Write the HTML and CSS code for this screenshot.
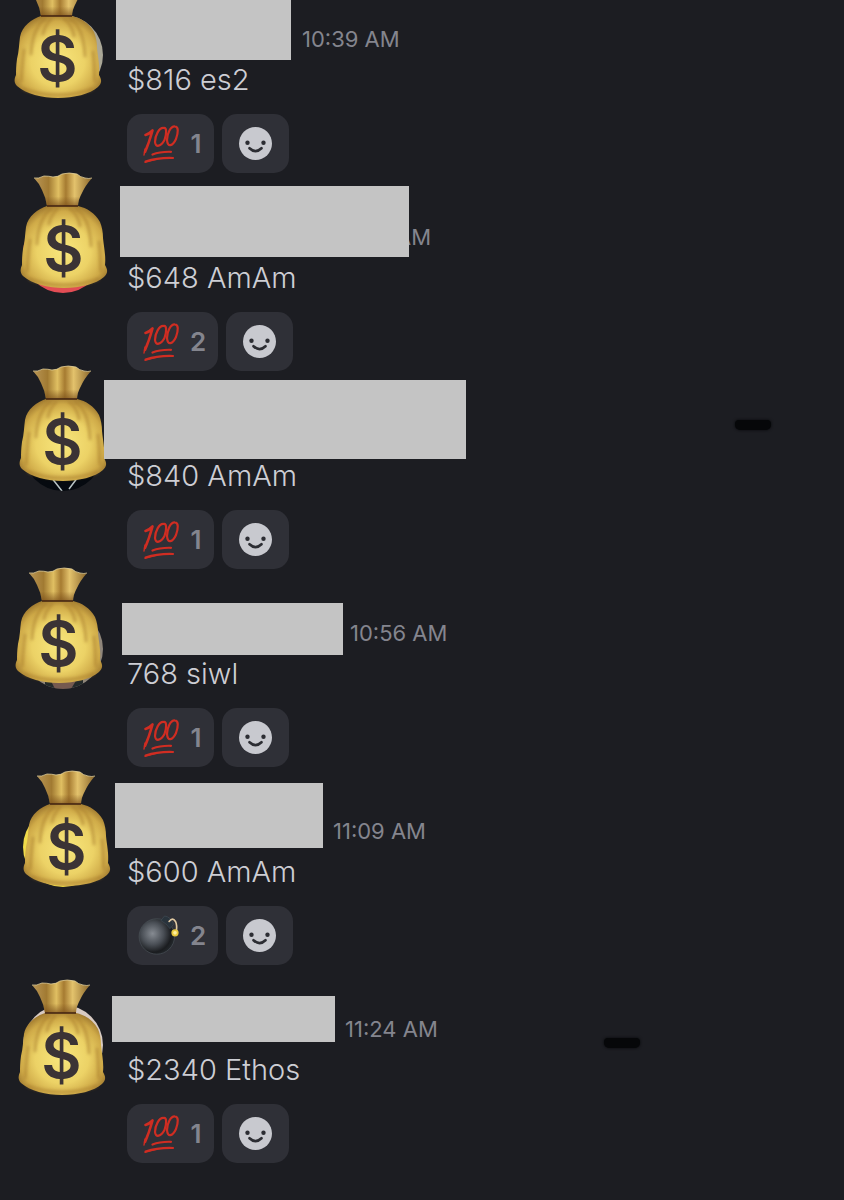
FILE: index.html
```
<!DOCTYPE html>
<html lang="en">
<head>
<meta charset="utf-8">
<meta name="viewport" content="width=device-width, initial-scale=1">
<title>Channel</title>
<link rel="stylesheet" href="styles.css">
</head>
<body>
<svg class="defs" aria-hidden="true">
  <defs>
    <radialGradient id="bag-body" cx="50%" cy="55%" r="62%">
      <stop offset="0" stop-color="#f8e67c"/>
      <stop offset=".5" stop-color="#ecd266"/>
      <stop offset=".78" stop-color="#cfaa48"/>
      <stop offset="1" stop-color="#8e6726"/>
    </radialGradient>
    <linearGradient id="bag-top" x1="0" x2="1" y1="0" y2="0">
      <stop offset="0" stop-color="#b99656"/>
      <stop offset=".25" stop-color="#a17a32"/>
      <stop offset=".42" stop-color="#e0bf62"/>
      <stop offset=".55" stop-color="#a67b31"/>
      <stop offset=".7" stop-color="#e3c26c"/>
      <stop offset="1" stop-color="#8b672c"/>
    </linearGradient>
    <linearGradient id="bag-neck" x1="0" x2="0" y1="0" y2="1">
      <stop offset=".4" stop-color="#7a4f1a" stop-opacity="0"/>
      <stop offset="1" stop-color="#7a4f1a" stop-opacity=".7"/>
    </linearGradient>
    <radialGradient id="bomb-body" cx="38%" cy="42%" r="62%">
      <stop offset="0" stop-color="#868b92"/>
      <stop offset=".5" stop-color="#4a4f56"/>
      <stop offset=".85" stop-color="#1a1c1f"/>
      <stop offset="1" stop-color="#22262a"/>
    </radialGradient>
    <filter id="fold-blur" x="-50%" y="-20%" width="200%" height="140%"><feGaussianBlur stdDeviation="1.5"/></filter>
  </defs>
  <symbol id="money-bag" viewBox="0 0 88 118" overflow="visible">
    <path fill="url(#bag-body)" d="M27 34C18 37 8 44 6 55C5 62 5 69 3 77C2 84 2 89 2 93C0 97 0 101 3 104C12 112 28 116 44 116C60 116 76 112 84 105C88 101 88 98 85 93C86 84 84 76 83 66C83 60 82 55 80 50C75 41 67 36 58 34Z"/>
    <g fill="none" stroke="#a47829" stroke-width="3" stroke-linecap="round" opacity=".5" filter="url(#fold-blur)">
      <path d="M31 37C23 43 18 53 17 72"/>
      <path d="M37 37C33 41 30 47 29 52"/>
      <path d="M50 37C56 41 59 47 60 54"/>
      <path d="M56 37C65 43 70 53 71 74"/>
      <path d="M10 68C8 82 8 92 7 99"/>
      <path d="M79 70C81 84 80 94 81 99"/>
      <path d="M10 107C31 115 57 115 78 107"/>
    </g>
    <path fill="url(#bag-top)" d="M14 6Q18 7 24 4Q29 4 33 5Q38 5 42 2Q49 0 57 2Q60 5 65 6Q69 7 72 6Q65 14 62 21Q58 28 58 34H27Q26 26 22 18Q19 11 14 6Z"/>
    <path fill="url(#bag-neck)" d="M22 18L62 21Q58 28 58 34H27Q26 26 22 18Z"/>
    <path fill="none" stroke="#ead9a4" opacity=".7" d="M14 6Q18 7 24 4Q29 4 33 5Q38 5 42 2Q49 0 57 2Q60 5 65 6Q69 7 72 6"/>
    <path fill="none" stroke="#3f2110" stroke-width="1.5" d="M27 34H58"/>
    <text class="bag-sign" x="43.5" y="99" text-anchor="middle">$</text>
  </symbol>
  <symbol id="hundred" viewBox="0 0 40 44">
    <g fill="none" stroke="#d02d22" stroke-linecap="round" stroke-linejoin="round">
      <path stroke-width="2.6" d="M5.500 13Q9 12 12.500 8.500Q9 21 5 30"/>
      <path stroke-width="1.400" d="M5 27L4 33"/>
      <path stroke-width="2.200" d="M24 6C19 5 15 14 15 20C15.500 26 21 24.500 24.500 18C27 11 26.500 5.500 24 6Z"/>
      <path stroke-width="2.200" d="M35 4.500C30.500 4 27 12 27 18C27.500 25.500 32.500 24.500 36 17C38.500 10 38.500 4.500 35 4.500Z"/>
      <path stroke-width="2.200" d="M12.500 32.500Q20 29.500 31 29.800"/>
      <path stroke-width="2.200" d="M5.500 39.500Q18 35.500 33 36"/>
      <path stroke-width="1.200" d="M5 40.500L16 37.500"/>
    </g>
  </symbol>
  <symbol id="bomb" viewBox="0 0 44 44" overflow="visible">
    <circle cx="18.500" cy="22.500" r="19.500" fill="url(#bomb-body)" stroke="#4b5258" stroke-width=".7"/>
    <path fill="#29333c" stroke="#46515a" stroke-width=".6" d="M23 5L27 0Q34 1 37 9L33 14Q29 8 23 5Z"/>
    <path fill="none" stroke="#e0c9a2" stroke-width="1.800" stroke-linecap="round" d="M32 6Q36 1 39 6Q41 10 40 17"/>
    <circle cx="38.500" cy="18.500" r="4" fill="#e9c93e"/>
    <circle cx="38.500" cy="18.500" r="2" fill="#fff0a0"/>
  </symbol>
  <symbol id="smiley" viewBox="0 0 33 33">
    <circle cx="16.500" cy="16.500" r="16.500" fill="#c8c9cf"/>
    <circle cx="8.500" cy="15.800" r="2.200" fill="#2c2d33"/>
    <circle cx="24.500" cy="15.800" r="2.200" fill="#2c2d33"/>
    <path fill="none" stroke="#2c2d33" stroke-width="2.600" stroke-linecap="round" d="M10.500 21.200Q16.500 27 22.500 21.200"/>
  </symbol>
</svg>

<main>
<ul class="messages">
  <li class="message m1">
    <span class="avatar"></span>
    <svg class="bag" aria-hidden="true"><use href="#money-bag"/></svg>
    <header class="meta"><span class="name"></span><time class="time">10:39 AM</time></header>
    <p class="text">$816 es2</p>
    <div class="reactions">
      <button class="reaction" type="button" aria-label="Hundred points, 1"><svg class="emoji"><use href="#hundred"/></svg><span class="count one">1</span></button>
      <button class="reaction add" type="button" aria-label="Add reaction"><svg class="smile"><use href="#smiley"/></svg></button>
    </div>
    <span class="mask"></span>
  </li>
  <li class="message m2">
    <span class="avatar"></span>
    <svg class="bag" aria-hidden="true"><use href="#money-bag"/></svg>
    <header class="meta"><span class="name"></span><time class="time">AM</time></header>
    <p class="text">$648 AmAm</p>
    <div class="reactions">
      <button class="reaction" type="button" aria-label="Hundred points, 2"><svg class="emoji"><use href="#hundred"/></svg><span class="count">2</span></button>
      <button class="reaction add" type="button" aria-label="Add reaction"><svg class="smile"><use href="#smiley"/></svg></button>
    </div>
    <span class="mask"></span>
  </li>
  <li class="message m3">
    <span class="avatar"><svg class="photo" viewBox="0 0 80 80"><path d="M28 66L39 80M55 66L46 78" stroke="#b9c4c6" stroke-width="1.500"/></svg></span>
    <svg class="bag" aria-hidden="true"><use href="#money-bag"/></svg>
    <header class="meta"><span class="name"></span></header>
    <p class="text">$840 AmAm</p>
    <div class="reactions">
      <button class="reaction" type="button" aria-label="Hundred points, 1"><svg class="emoji"><use href="#hundred"/></svg><span class="count one">1</span></button>
      <button class="reaction add" type="button" aria-label="Add reaction"><svg class="smile"><use href="#smiley"/></svg></button>
    </div>
    <span class="mask"></span>
    <span class="smudge"></span>
  </li>
  <li class="message m4">
    <span class="avatar"><svg class="photo" viewBox="0 0 80 80"><path d="M22 70H60V80H22Z" fill="#232a2b"/><path d="M27 70H54L48 80H32Z" fill="#755a50"/></svg></span>
    <svg class="bag" aria-hidden="true"><use href="#money-bag"/></svg>
    <header class="meta"><span class="name"></span><time class="time">10:56 AM</time></header>
    <p class="text">768 siwl</p>
    <div class="reactions">
      <button class="reaction" type="button" aria-label="Hundred points, 1"><svg class="emoji"><use href="#hundred"/></svg><span class="count one">1</span></button>
      <button class="reaction add" type="button" aria-label="Add reaction"><svg class="smile"><use href="#smiley"/></svg></button>
    </div>
    <span class="mask"></span>
  </li>
  <li class="message m5">
    <span class="avatar"></span>
    <svg class="bag" aria-hidden="true"><use href="#money-bag"/></svg>
    <header class="meta"><span class="name"></span><time class="time">11:09 AM</time></header>
    <p class="text">$600 AmAm</p>
    <div class="reactions">
      <button class="reaction" type="button" aria-label="Bomb, 2"><svg class="emoji"><use href="#bomb"/></svg><span class="count">2</span></button>
      <button class="reaction add" type="button" aria-label="Add reaction"><svg class="smile"><use href="#smiley"/></svg></button>
    </div>
    <span class="mask"></span>
  </li>
  <li class="message m6">
    <span class="avatar"></span>
    <svg class="bag" aria-hidden="true"><use href="#money-bag"/></svg>
    <header class="meta"><span class="name"></span><time class="time">11:24 AM</time></header>
    <p class="text">$2340 Ethos</p>
    <div class="reactions">
      <button class="reaction" type="button" aria-label="Hundred points, 1"><svg class="emoji"><use href="#hundred"/></svg><span class="count one">1</span></button>
      <button class="reaction add" type="button" aria-label="Add reaction"><svg class="smile"><use href="#smiley"/></svg></button>
    </div>
    <span class="mask"></span>
    <span class="smudge"></span>
  </li>
</ul>
</main>
</body>
</html>
```
FILE: styles.css
```
* { box-sizing: border-box; }

body {
  margin: 0;
  background: #1c1d22;
  color: #cdced4;
  font-family: Inter, "Open Sans", sans-serif;
  overflow-x: hidden;
}

.defs { position: absolute; width: 0; height: 0; }

.messages {
  margin: 0;
  padding: 0 0 12px;
  list-style: none;
}

.message {
  position: relative;
  padding: 22px 16px 25px 127px;
}

.meta {
  display: flex;
  align-items: center;
  height: 34px;
}

.name { flex: none; width: var(--name-width); }

.time {
  color: #84858e;
  font-size: 22px;
  line-height: 34px;
  white-space: nowrap;
}

.text {
  margin: 4px 0 14px;
  font-size: 29px;
  font-weight: 300;
  line-height: 40px;
}

.reactions { display: flex; gap: 8px; }

.reaction {
  display: flex;
  align-items: center;
  gap: 10px;
  height: 59px;
  padding: 0 12px 0 13px;
  border: 0;
  border-radius: 15px;
  background: #2f3037;
  color: #84858e;
  font: 600 26px/34px Inter, "Open Sans", sans-serif;
}

.add { justify-content: center; width: 67px; padding: 0; }

.emoji { width: 40px; height: 44px; overflow: visible; }
.smile { width: 33px; height: 33px; }
.count { width: 16px; text-align: center; }
.count.one { width: 12px; }

/* Layers that lie over the message */
.avatar {
  position: absolute;
  top: 15px;
  left: 23px;
  width: 80px;
  height: 80px;
  overflow: hidden;
  border-radius: 50%;
  background: var(--avatar, transparent);
}

.photo { display: block; width: 100%; height: 100%; }

.bag {
  position: absolute;
  top: var(--bag-top);
  left: var(--bag-left);
  width: 88px;
  height: 118px;
  overflow: visible;
}

.bag-sign {
  fill: #3b3335;
  font: 600 62px Inter, "Liberation Sans", sans-serif;
}

.mask {
  position: absolute;
  top: var(--mask-top);
  left: var(--mask-left);
  width: var(--mask-width);
  height: var(--mask-height);
  background: #c4c4c4;
}

.smudge {
  position: absolute;
  top: var(--smudge-top);
  right: var(--smudge-right);
  width: 36px;
  height: 10px;
  border-radius: 4px 4px 5px 5px;
  background: #060709;
  box-shadow: 0 0 3px #060709;
}

.m1 { --name-width: 175px; --avatar: #aaa797; --bag-left: 14px; --bag-top: -18px; --mask-left: 116px; --mask-top: 0px; --mask-width: 175px; --mask-height: 60px; }
.m2 { --name-width: 269px; --avatar: #e34d55; --bag-left: 20px; --bag-top: -26px; --mask-left: 120px; --mask-top: -12px; --mask-width: 289px; --mask-height: 71px; }
.m3 { --name-width: 210px; --avatar: #060a10; --bag-left: 19px; --bag-top: -31px; --mask-left: 104px; --mask-top: -16px; --mask-width: 362px; --mask-height: 79px; --smudge-top: 24px; --smudge-right: 73px; }
.m4 { --name-width: 223px; --avatar: #8f867b; --bag-left: 15px; --bag-top: -27px; --mask-left: 122px; --mask-top: 9px; --mask-width: 221px; --mask-height: 52px; }
.m5 { --name-width: 206px; --avatar: #f0db4a; --bag-left: 23px; --bag-top: -22px; --mask-left: 115px; --mask-top: -9px; --mask-width: 208px; --mask-height: 65px; }
.m6 { --name-width: 218px; --avatar: #d8cbc3; --bag-left: 18px; --bag-top: -11px; --mask-left: 112px; --mask-top: 6px; --mask-width: 223px; --mask-height: 46px; --smudge-top: 48px; --smudge-right: 204px; }
```
